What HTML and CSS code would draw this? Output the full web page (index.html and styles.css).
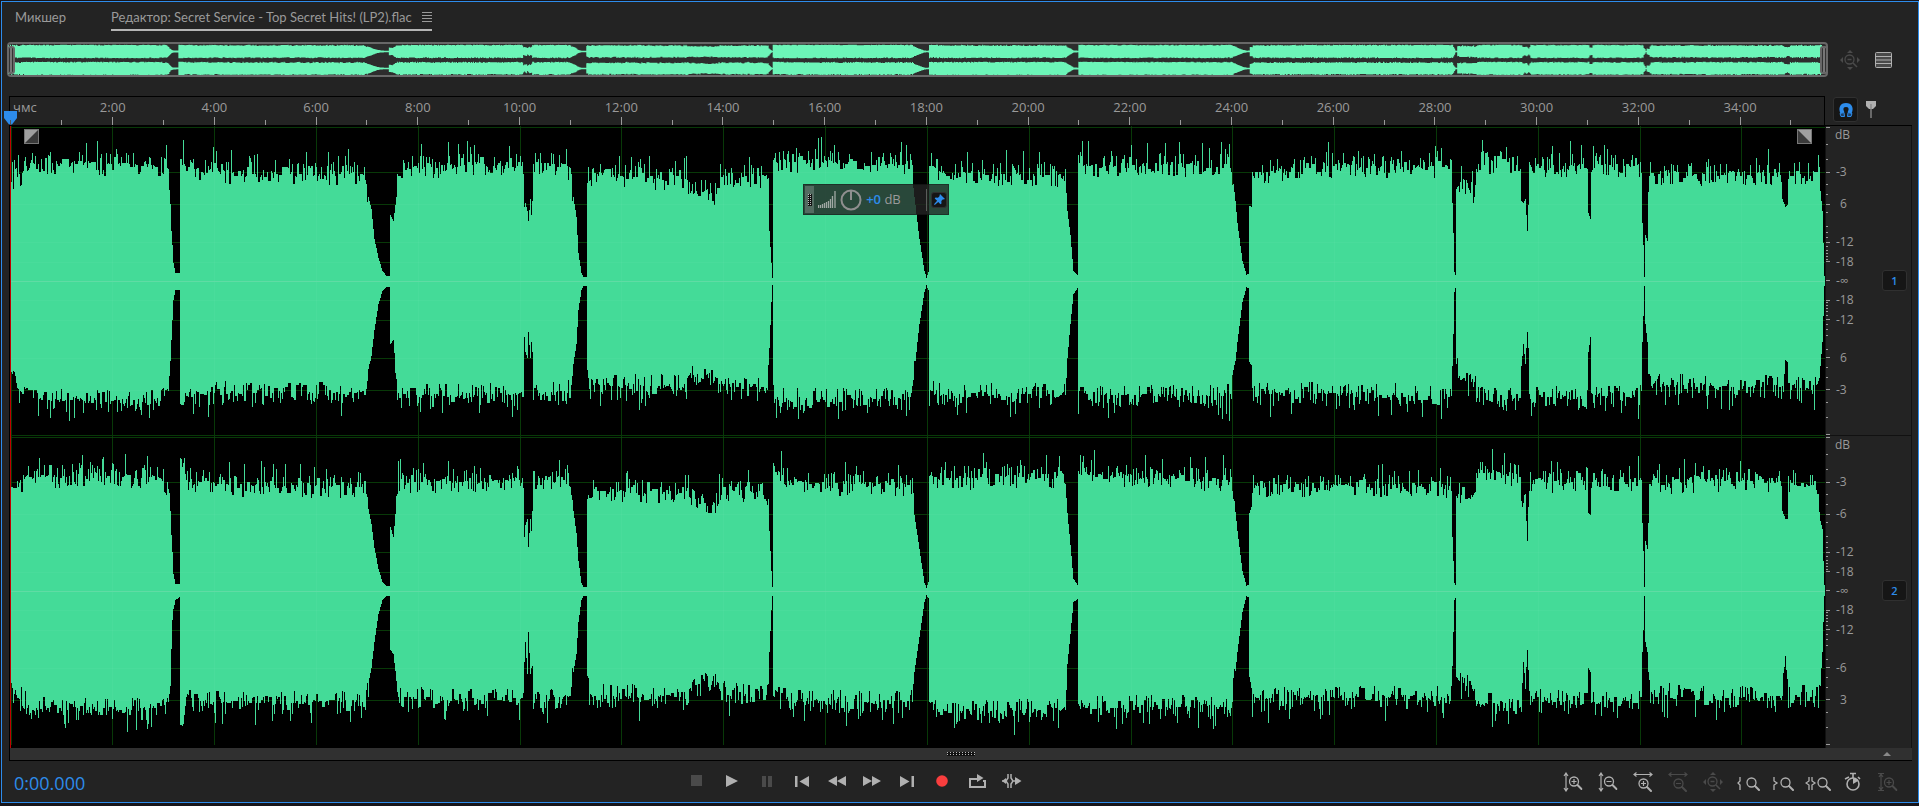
FILE: index.html
```html
<!DOCTYPE html>
<html lang="ru">
<head>
  <meta charset="UTF-8" />
  <meta name="viewport" content="width=device-width, initial-scale=1.0" />
  <title>Редактор</title>
  <link rel="stylesheet" href="styles.css">
</head>
<body>
  <svg class="defs" aria-hidden="true">
    <symbol id="lens" viewBox="0 0 14 14">
      <circle cx="5.5" cy="5.5" r="4.5" fill="none" stroke="currentColor" stroke-width="1.3"/>
      <path d="M9 9l4 4" stroke="currentColor" stroke-width="2" stroke-linecap="round"/>
    </symbol>
    <symbol id="zoom-full" viewBox="0 0 20 20">
      <circle cx="9.5" cy="9.5" r="4.5" fill="none" stroke="currentColor" stroke-width="1.3"/>
      <path d="M7.5 9.5h4M13 13l4 4" fill="none" stroke="currentColor" stroke-width="1.6"/>
      <path d="M7 3l3-3 3 3zM7 17l3 3 3-3zM3 7l-3 3 3 3zM17 7l3 3-3 3z" fill="currentColor"/>
    </symbol>
  </svg>

  <main class="panel">
    <nav class="tabs">
      <button class="tab" type="button">Микшер</button>
      <button class="tab active" type="button">Редактор: Secret Service - Top Secret Hits! (LP2).flac
        <svg width="10" height="10" viewBox="0 0 10 10"><path d="M0 .5h10M0 3.5h10M0 6.5h10M0 9.5h10" stroke="currentColor"/></svg>
      </button>
    </nav>

    <div class="overview-row">
      <div class="overview">
        <span class="handle"></span>
        <svg id="overview" viewBox="0 0 1815 31" preserveAspectRatio="none"></svg>
        <span class="handle"></span>
      </div>
      <button class="icon dim" type="button" aria-label="Показать всё"><svg width="20" height="20"><use href="#zoom-full"/></svg></button>
      <button class="icon" type="button" aria-label="Список">
        <svg width="17" height="16" viewBox="0 0 17 16"><rect x=".5" y=".5" width="16" height="15" rx="1" fill="#4a4a4a" stroke="currentColor"/><path d="M0 4.5h17M0 8h17M0 11.5h17" stroke="currentColor" stroke-width="1.2"/></svg>
      </button>
    </div>

    <section class="editor">
      <div class="ruler">
        <svg id="ruler" class="axis"></svg>
        <svg class="playhead-cap" width="13" height="14" viewBox="0 0 13 14"><path d="M0 0h13v7l-5 6.500h-3l-5-6.500z" fill="#2d8ceb"/><path d="M6.500 9v5" stroke="#555"/></svg>
      </div>
      <div class="ruler-tools">
        <button class="toggle magnet" type="button" aria-label="Привязка">
          <svg width="16" height="16" viewBox="0 0 16 16"><path d="M4.500 11C2 6 4 3 8 3s6 3 3.500 8" fill="none" stroke="#2d8ceb" stroke-width="4"/><path d="M2 11.500l4-1 .5 4H3zM14 11.500l-4-1-.5 4H13z" fill="#1b3f68" stroke="#2d8ceb"/></svg>
        </button>
        <button class="icon marker" type="button" aria-label="Маркер">
          <svg width="10" height="17" viewBox="0 0 10 17"><path d="M0 0h10v5L7 8H3L0 5z" fill="currentColor"/><path d="M5 3v14" stroke="#888" stroke-width="1.400"/></svg>
        </button>
      </div>

      <div class="waves">
        <svg class="channel" data-channel="0" viewBox="0 0 1815 310" preserveAspectRatio="none"></svg>
        <svg class="channel" data-channel="1" viewBox="0 0 1815 310" preserveAspectRatio="none"></svg>
        <span class="playhead"></span>
        <svg class="fade fade-in" width="15" height="15" viewBox="0 0 15 15"><rect width="15" height="15" fill="#a0a0a0"/><path d="M14 1v13H1z" fill="#3a3a3a"/><rect x=".5" y=".5" width="14" height="14" fill="none" stroke="#777"/></svg>
        <svg class="fade fade-out" width="15" height="15" viewBox="0 0 15 15"><rect width="15" height="15" fill="#a0a0a0"/><path d="M1 1v13h13z" fill="#3a3a3a"/><rect x=".5" y=".5" width="14" height="14" fill="none" stroke="#777"/></svg>
        <div class="hud">
          <span class="hud-grip"><i class="dots"></i></span>
          <svg width="18" height="17" viewBox="0 0 18 17"><path d="M.5 17v-3M2.500 17v-3M4.500 17v-4M6.500 17v-5M8.500 17v-6M10.500 17v-7M12.500 17v-9M14.500 17v-12M17 17v-17" stroke="#a0a8a4" stroke-width="1.300"/></svg>
          <svg width="22" height="22" viewBox="0 0 22 22"><circle cx="11" cy="11" r="9.500" fill="none" stroke="#8f8f8f" stroke-width="2"/><path d="M11 2v9" stroke="#8f8f8f" stroke-width="2"/></svg>
          <span class="gain"><b>+0</b> dB</span>
          <span class="hud-line"></span>
          <button class="toggle pin" type="button" aria-label="Закрепить">
            <svg width="11" height="11" viewBox="0 0 11 11"><path d="M6 0l5 5-1.500.5-.5-.2-1.700 1.700.2 2.500-1 .8L4.200 7.900.8 11 0 10.200l3.100-3.400L.7 4.500l.8-1 2.500.2L5.700 2l-.2-.5z" fill="#2d8ceb"/></svg>
          </button>
        </div>
      </div>
      <div class="scales">
        <div class="scale"><svg class="axis db" data-blank="-6"></svg><button class="toggle ch" type="button">1</button></div>
        <div class="scale"><svg class="axis db" data-blank="3"></svg><button class="toggle ch" type="button">2</button></div>
      </div>

      <div class="scrollbar">
        <i class="dots wide"></i>
        <svg width="8" height="4" viewBox="0 0 8 4"><path d="M0 4l4-4 4 4z" fill="#8a8a8a"/></svg>
      </div>
    </section>

    <footer class="bar">
      <output class="time">0:00.000</output>
      <div class="buttons transport">
        <button class="dim" type="button" aria-label="Стоп"><svg width="12" height="12"><path d="M0 0h11v11H0z" fill="currentColor"/></svg></button>
        <button type="button" aria-label="Воспроизведение"><svg width="12" height="12"><path d="M0 0l12 6-12 6z" fill="currentColor"/></svg></button>
        <button class="dim" type="button" aria-label="Пауза"><svg width="10" height="12"><path d="M0 1h4v11H0zM6 1h4v11H6z" fill="currentColor"/></svg></button>
        <button type="button" aria-label="В начало"><svg width="14" height="12"><path d="M0 1h2.500v11H0zM14 1v11L4.500 6.500z" fill="currentColor"/></svg></button>
        <button type="button" aria-label="Назад"><svg width="18" height="10"><path d="M9 0v10L0 5zM18 0v10L9 5z" fill="currentColor"/></svg></button>
        <button type="button" aria-label="Вперёд"><svg width="18" height="10"><path d="M0 0v10l9-5zM9 0v10l9-5z" fill="currentColor"/></svg></button>
        <button type="button" aria-label="В конец"><svg width="14" height="12"><path d="M0 1v11l9.500-5.500zM11.500 1H14v11h-2.500z" fill="currentColor"/></svg></button>
        <button type="button" aria-label="Запись"><svg width="12" height="12"><circle cx="6" cy="6" r="5.800" fill="#f93e3e"/></svg></button>
        <button type="button" aria-label="Цикл"><svg width="17" height="14" viewBox="0 0 17 14"><path d="M5 5H1v8h15V7h-2" fill="none" stroke="currentColor" stroke-width="2"/><path d="M5 4h3V0l6.500 4L8 8V6H5z" fill="currentColor"/></svg></button>
        <button type="button" aria-label="Пропуск выделения"><svg width="20" height="14" viewBox="0 0 20 14"><path d="M6 0v4L4 7l2 3v4M9 0v4l2 3-2 3v4M0 7h5M10 7h6" fill="none" stroke="currentColor" stroke-width="1.500"/><path d="M0 7l4-3v6zM13 3l6.500 4L13 11z" fill="currentColor"/></svg></button>
      </div>
      <div class="buttons">
        <button type="button" aria-label="Увеличить амплитуду"><svg width="20" height="20" viewBox="0 0 20 20"><path d="M3 2v16M1 4l2-3 2 3M1 16l2 3 2-3M8.500 9.500h5M11 7v5" fill="none" stroke="currentColor" stroke-width="1.200"/><use href="#lens" x="5.500" y="4" width="14" height="14"/></svg></button>
        <button type="button" aria-label="Уменьшить амплитуду"><svg width="20" height="20" viewBox="0 0 20 20"><path d="M3 2v16M1 4l2-3 2 3M1 16l2 3 2-3M8.500 9.500h5" fill="none" stroke="currentColor" stroke-width="1.200"/><use href="#lens" x="5.500" y="4" width="14" height="14"/></svg></button>
        <button type="button" aria-label="Увеличить время"><svg width="20" height="20" viewBox="0 0 20 20"><path d="M1 2.500h18M3.500.5L1 2.500l2.500 2M16.500.5l2.500 2-2.500 2M8 11.500h5M10.500 9v5" fill="none" stroke="currentColor" stroke-width="1.200"/><use href="#lens" x="5" y="6" width="14" height="14"/></svg></button>
        <button class="dim" type="button" aria-label="Уменьшить время"><svg width="20" height="20" viewBox="0 0 20 20"><path d="M1 2.500h18M3.500.5L1 2.500l2.500 2M16.500.5l2.500 2-2.500 2M8 11.500h5" fill="none" stroke="currentColor" stroke-width="1.200"/><use href="#lens" x="5" y="6" width="14" height="14"/></svg></button>
        <button class="dim" type="button" aria-label="Весь файл"><svg width="20" height="20"><use href="#zoom-full"/></svg></button>
        <button type="button" aria-label="К точке входа"><svg width="24" height="20" viewBox="0 0 24 20"><path d="M4 5v4l-2 2 2 2v5" fill="none" stroke="currentColor" stroke-width="1.300"/><use href="#lens" x="10" y="5" width="14" height="14"/></svg></button>
        <button type="button" aria-label="К точке выхода"><svg width="22" height="20" viewBox="0 0 22 20"><path d="M2 5v4l3 2-3 2v5" fill="none" stroke="currentColor" stroke-width="1.300"/><use href="#lens" x="8" y="5" width="14" height="14"/></svg></button>
        <button type="button" aria-label="К выделению"><svg width="26" height="20" viewBox="0 0 26 20"><path d="M4 5v4l-3 2 3 2v5M7 5v4l3 2-3 2v5" fill="none" stroke="currentColor" stroke-width="1.300"/><use href="#lens" x="12" y="5" width="14" height="14"/></svg></button>
        <button type="button" aria-label="Таймер"><svg width="18" height="20" viewBox="0 0 18 20"><circle cx="9" cy="12" r="6" fill="none" stroke="currentColor" stroke-width="1.600"/><path d="M9 12V6a6 6 0 0 1 5 3z" fill="currentColor"/><path d="M9 6V2M6 1.500h6M1 7l4-2M14 5l2 2" stroke="currentColor" stroke-width="1.600"/></svg></button>
        <button class="dim" type="button" aria-label="Сбросить масштаб"><svg width="20" height="20" viewBox="0 0 20 20"><path d="M3 2v16M0 1.500h6M0 18.500h6M1 5l2-3 2 3M1 15l2 3 2-3M8.500 10.500h5M11 8v5" fill="none" stroke="currentColor" stroke-width="1.200"/><use href="#lens" x="5.500" y="5" width="14" height="14"/></svg></button>
      </div>
    </footer>
  </main>

  <script src="wave.js"></script>
</body>
</html>
```
FILE: styles.css
```css
* {
  box-sizing: border-box;
}
body {
  margin: 0;
  min-height: 100vh;
  padding: 1px 0 3px 1px;
  display: flex;
  background: #17151a;
  color: #9a9a9a;
  font-family: "Open Sans", "Noto Sans", sans-serif;
  font-size: 13px;
}
button {
  margin: 0;
  padding: 0;
  border: 0;
  background: none;
  color: #b0b0b0;
  font: inherit;
}
svg {
  display: block;
}
.defs {
  position: absolute;
  width: 0;
  height: 0;
}
.panel {
  flex: 1;
  min-width: 0;
  display: flex;
  flex-direction: column;
  border: 1px solid #2d8ceb;
  background: #232323;
}

/* tabs */
.tabs {
  display: flex;
  gap: 45px;
  height: 29px;
  padding-left: 13px;
}
.tab {
  display: flex;
  align-items: center;
  gap: 10px;
  padding-top: 2px;
  color: #9a9a9a;
  font-family: Lato, "Noto Sans", sans-serif;
  font-size: 13px;
  white-space: nowrap;
  border-bottom: 2px solid transparent;
}
.tab.active {
  border-color: #b5b5b5;
}

/* overview */
.overview-row {
  display: flex;
  align-items: center;
  gap: 12px;
  margin-top: 11px;
  padding: 0 26px 0 5px;
}
.overview {
  flex: 1;
  min-width: 0;
  display: flex;
  align-items: center;
  height: 35px;
  border: 2px solid #686868;
  border-radius: 4px;
  background: #2d2d2d;
}
.overview svg {
  flex: 1;
  min-width: 0;
  height: 31px;
  margin: 0 -5px;
}
.handle {
  z-index: 1;
  width: 8px;
  height: 28px;
  margin: 0 -2px;
  border: 2px solid #686868;
  border-radius: 3px;
  background: linear-gradient(90deg, #333 1px, #777 1px, #777 3px, #333 3px);
}
.icon {
  display: flex;
}
.overview-row .icon + .icon {
  margin-left: 3px;
}
.dim {
  color: #4a4a4a;
}

/* editor */
.editor {
  flex: 1;
  display: grid;
  grid-template-columns: 1fr 87px;
  grid-template-rows: 30px 1fr 12px;
  margin: 19px 6px 0 7px;
  border-left: 1px solid #000;
  border-bottom: 1px solid #000;
}
.ruler {
  position: relative;
  padding-left: 1px;
  border-top: 1px solid #000;
  border-right: 1px solid #000;
  border-bottom: 1px solid #000;
}
.axis {
  width: 100%;
  height: 100%;
}
.axis text {
  fill: #9a9a9a;
  font-size: 13px;
}
.axis line {
  stroke: #9a9a9a;
  shape-rendering: crispEdges;
}
.playhead-cap {
  position: absolute;
  left: -6px;
  bottom: 0;
}
.ruler-tools {
  display: flex;
  align-items: center;
  gap: 8px;
  padding: 0 0 2px 8px;
  border-bottom: 1px solid #000;
}
.toggle {
  display: flex;
  align-items: center;
  justify-content: center;
  border: 1px solid #303030;
  border-radius: 3px;
  background: #161616;
  color: #2d8ceb;
}
.magnet {
  width: 25px;
  height: 25px;
}
.waves {
  position: relative;
  display: flex;
  flex-direction: column;
  padding-bottom: 3px;
  background: #000;
}
.channel {
  flex: 1 1 0;
  width: 100%;
  height: 0;
  shape-rendering: crispEdges;
}
.grid {
  fill: #003300;
}
.body {
  fill: #44db98;
}
.glow {
  fill: #fff;
  opacity: 0.03;
}
.center {
  fill: #5fdca4;
}
.playhead {
  position: absolute;
  top: 0;
  bottom: 0;
  left: 0;
  width: 1px;
  background: #c00000;
}
.fade {
  position: absolute;
  top: 3px;
}
.fade-in {
  left: 14px;
}
.fade-out {
  right: 13px;
}
.hud {
  position: absolute;
  top: 58px;
  left: 43.7%;
  display: flex;
  align-items: center;
  gap: 4px;
  width: 146px;
  height: 31px;
  padding: 1px;
  border: 1px solid rgba(0, 0, 0, 0.3);
  background: rgba(35, 35, 35, 0.8);
}
.hud-grip {
  display: flex;
  align-items: center;
  justify-content: center;
  align-self: stretch;
  width: 9px;
  background: rgba(255, 255, 255, 0.2);
}
.dots {
  width: 4px;
  height: 12px;
  background: conic-gradient(at 1px 1px, #111 75%, #bbb 0) 0 0 / 2px 2px;
}
.dots.wide {
  width: 28px;
  height: 4px;
  background-size: 3px 2px;
}
.gain {
  flex: 1;
  padding-bottom: 2px;
  white-space: nowrap;
}
.gain b {
  color: #2d8ceb;
  font-weight: 600;
}
.hud-line {
  width: 1px;
  height: 22px;
  background: #5c5c5c;
}
.pin {
  width: 16px;
  height: 16px;
}
.scales {
  display: flex;
  flex-direction: column;
  padding-bottom: 3px;
  border-left: 1px solid #111;
  border-right: 1px solid #111;
}
.scale {
  flex: 1 1 0;
  display: flex;
  align-items: center;
  justify-content: space-between;
  padding-right: 4px;
}
.scale + .scale {
  border-top: 1px solid #111;
}
.scale .axis {
  width: 40px;
}
.db text {
  font-size: 12px;
}
.ch {
  width: 25px;
  height: 21px;
  font-size: 11px;
  font-weight: 600;
}
.scrollbar {
  grid-column: 1 / -1;
  display: grid;
  grid-template-columns: 1fr auto 1fr;
  align-items: center;
  background: #303030;
}
.scrollbar .dots {
  grid-column: 2;
}
.scrollbar svg {
  justify-self: end;
  margin-right: 21px;
}

/* transport */
.bar {
  display: flex;
  align-items: center;
  justify-content: space-between;
  height: 41px;
  padding: 0 13px 0 12px;
}
.time {
  width: 140px;
  padding-top: 2px;
  color: #2d8ceb;
  font-size: 18px;
}
.buttons {
  display: flex;
}
.transport {
  padding-bottom: 2px;
}
.buttons button {
  display: flex;
  align-items: center;
  justify-content: center;
  width: 35px;
  height: 34px;
}
```
FILE: wave.js
```js
const NS = 'http://www.w3.org/2000/svg';
const LENGTH = 1815;      // columns in the file
const MINUTES = 35.65;    // duration
const FULL = 154;         // 0 dB height, in columns' units

// position, left up, left down, right up, right down
const ENV = [
  [0, 100, 92, 105, 100], [12, 108, 108, 106, 106], [18, 118, 117, 114, 115], [90, 117, 119, 116, 117],
  [150, 116, 117, 114, 116], [158, 112, 108, 102, 108], [160, 85, 88, 80, 85], [161, 50, 58, 56, 57],
  [162, 36, 38, 39, 28], [163, 18, 18, 17, 17], [165, 8, 8, 7, 8], [169, 8, 8, 7, 5],
  [170, 126, 122, 132, 132], [173, 120, 124, 127, 133], [176, 112, 112, 112, 108], [230, 107, 111, 106, 111],
  [355, 107, 111, 104, 110], [357, 88, 95, 87, 96], [361, 72, 74, 67, 76], [364, 42, 48, 43, 50],
  [368, 23, 22, 22, 22], [372, 10, 9, 9, 8], [376, 5, 5, 5, 4], [379, 5, 5, 5, 4],
  [380, 66, 62, 64, 58], [383, 60, 58, 54, 62], [386, 84, 98, 88, 88], [388, 114, 115, 108, 106],
  [450, 116, 113, 110, 108], [513, 115, 112, 110, 107], [514, 74, 55, 54, 70], [515, 78, 70, 66, 50],
  [517, 70, 76, 72, 82], [518, 60, 50, 44, 40], [520, 82, 76, 72, 82], [521, 66, 60, 60, 76],
  [522, 80, 70, 80, 74], [523, 119, 111, 112, 112], [555, 116, 111, 111, 106],
  [560, 104, 110, 104, 102], [563, 84, 82, 80, 80], [566, 64, 62, 58, 62], [568, 28, 28, 30, 30],
  [571, 8, 8, 8, 8], [573, 4, 4, 4, 4], [576, 4, 4, 4, 4], [577, 101, 95, 98, 96],
  [583, 106, 104, 102, 104], [676, 102, 104, 98, 104], [684, 90, 92, 92, 92], [704, 88, 94, 88, 92],
  [710, 106, 104, 102, 100], [755, 104, 108, 98, 104], [758, 100, 94, 92, 92], [759, 50, 66, 60, 60],
  [761, 18, 20, 20, 18], [762, 3, 3, 4, 4], [763, 119, 114, 124, 104], [780, 119, 118, 108, 109],
  [900, 118, 116, 106, 110], [902, 107, 105, 106, 100], [904, 84, 88, 76, 80], [909, 42, 42, 42, 45],
  [914, 10, 10, 8, 10], [916, 3, 3, 3, 3], [918, 9, 8, 9, 6], [919, 117, 108, 115, 115],
  [935, 107, 113, 113, 120], [1050, 106, 112, 114, 118], [1055, 104, 102, 106, 112], [1057, 70, 76, 78, 72],
  [1060, 46, 42, 46, 42], [1063, 10, 12, 12, 10], [1067, 6, 6, 6, 7], [1068, 115, 112, 117, 116],
  [1150, 116, 114, 113, 115], [1220, 115, 114, 111, 115], [1223, 102, 98, 98, 98], [1227, 58, 60, 60, 60],
  [1232, 20, 20, 20, 20], [1236, 6, 5, 5, 4], [1238, 7, 6, 6, 5], [1239, 75, 80, 78, 85],
  [1241, 74, 83, 84, 90], [1242, 108, 112, 104, 108], [1330, 116, 112, 106, 104], [1441, 112, 114, 104, 106],
  [1442, 78, 84, 54, 74], [1443, 48, 52, 30, 40], [1444, 9, 10, 8, 8], [1445, 6, 6, 6, 6], [1446, 92, 82, 92, 86],
  [1450, 98, 96, 98, 92], [1456, 96, 92, 98, 92], [1460, 86, 90, 92, 94], [1465, 92, 100, 100, 104],
  [1466, 118, 116, 119, 110], [1510, 119, 118, 116, 113], [1511, 80, 86, 90, 104], [1513, 78, 62, 88, 70],
  [1515, 82, 82, 90, 92], [1517, 50, 50, 50, 58], [1518, 76, 66, 84, 78], [1519, 115, 114, 108, 106],
  [1577, 117, 117, 112, 112], [1578, 68, 70, 78, 76], [1580, 62, 55, 76, 80],
  [1581, 116, 113, 111, 110], [1631, 115, 113, 112, 110], [1632, 58, 60, 68, 60], [1633, 36, 34, 40, 38],
  [1634, 4, 4, 4, 4], [1635, 46, 42, 50, 50], [1637, 40, 60, 42, 60], [1638, 96, 100, 68, 80],
  [1639, 112, 100, 108, 95], [1640, 108, 102, 108, 100], [1700, 107, 104, 110, 106], [1770, 108, 105, 110, 106],
  [1772, 82, 106, 80, 98], [1775, 74, 78, 72, 64], [1777, 76, 80, 72, 92], [1778, 108, 108, 106, 104],
  [1808, 106, 104, 106, 104], [1810, 90, 84, 70, 92], [1812, 70, 60, 62, 60], [1813, 38, 34, 30, 30],
  [1814, 5, 4, 6, 4]
];

let seed = 7;
function rnd() {
  seed = (seed * 16807) % 2147483647;
  return seed / 2147483647;
}

function el(parent, name, attrs, text) {
  const node = document.createElementNS(NS, name);
  for (const key in attrs) node.setAttribute(key, attrs[key]);
  if (text) node.textContent = text;
  parent.appendChild(node);
  return node;
}

// one height per column, with transients on the loud parts
function heights(col) {
  const out = [];
  let k = 0;
  let n = 0;
  for (let x = 0; x < LENGTH; x++) {
    while (k < ENV.length - 2 && ENV[k + 1][0] <= x) k++;
    const a = ENV[k], b = ENV[k + 1];
    const t = Math.min(1, (x - a[0]) / (b[0] - a[0]));
    let h = a[col] + (b[col] - a[col]) * t;
    if (h > 84) {
      const r = rnd();
      if (r < 0.3) n = rnd() * 6 - 3;
      else if (r < 0.5) n = -4 - rnd() * 8;
      else if (r < 0.7) n = 3 + rnd() * 9;
      else if (r < 0.76) n = 10 + rnd() * 15;
      else if (n > 9) n = 0;
      h = h > 121 ? h + n / 2 : h + n;
    }
    out.push(Math.round(h));
  }
  return out;
}

function outline(up, down, mid, k) {
  let d = 'M0 ' + mid;
  up.forEach((h, x) => { d += 'V' + (mid - h * k).toFixed(1) + 'H' + (x + 1); });
  for (let x = LENGTH - 1; x >= 0; x--) d += 'V' + (mid + 1 + down[x] * k).toFixed(1) + 'H' + x;
  return d + 'z';
}

function grid(svg, cls) {
  for (let m = 0; m < MINUTES; m += 2) {
    el(svg, 'rect', { class: cls, x: Math.round(m / MINUTES * LENGTH + 0.5), y: 0, width: 1, height: 309 });
  }
  [0, 3, 6, 12, 18].forEach(db => {
    const h = Math.round(FULL * Math.pow(10, -db / 20));
    el(svg, 'rect', { class: cls, x: 0, y: 155 - h, width: LENGTH, height: 1 });
    el(svg, 'rect', { class: cls, x: 0, y: 155 + h, width: LENGTH, height: 1 });
  });
}

const overview = document.getElementById('overview');
document.querySelectorAll('.channel').forEach((svg, i) => {
  const up = heights(1 + i * 2);
  const down = heights(2 + i * 2);
  grid(svg, 'grid');
  el(svg, 'path', { class: 'body', d: outline(up, down, 155, 1) });
  grid(svg, 'glow');
  el(svg, 'rect', { class: 'center', x: 0, y: 155, width: LENGTH, height: 1 });
  el(overview, 'path', {
    fill: '#6cf5b8',
    d: outline(up.map(h => Math.min(h, 122)), down.map(h => Math.min(h, 122)), 7 + i * 17, 0.052)
  });
});

const ruler = document.getElementById('ruler');
el(ruler, 'text', { x: 2, y: 15 }, 'чмс');
for (let m = 1; m < MINUTES; m++) {
  const x = m / MINUTES * 100 + '%';
  el(ruler, 'line', { x1: x, x2: x, y1: m % 2 ? 23 : 20, y2: 28 });
  if (m % 2 === 0) el(ruler, 'text', { x: x, y: 15, 'text-anchor': 'middle' }, m + ':00');
}

document.querySelectorAll('.db').forEach(svg => {
  const at = v => (155.5 + v) / 310 * 100 + '%';
  const tick = (v, w) => el(svg, 'line', { x1: 0, x2: w, y1: at(v), y2: at(v) });
  const label = (v, s) => el(svg, 'text', { x: s[0] === '-' ? 10 : 14, y: at(v), dy: 4 }, s);
  label(-146, 'dB');
  svg.lastChild.setAttribute('x', 9);
  tick(0, 4);
  label(0, '-∞');
  for (let db = 0; db <= 18; db++) {
    if (db === 8) continue;
    const v = FULL * Math.pow(10, -db / 20);
    const major = [0, 3, 6, 12, 18].includes(db);
    [-v, v].forEach(p => {
      tick(p, major ? 4 : 2);
      if (!major || db === 0) return;
      const bare = svg.dataset.blank === '-6' ? db === 6 : db === 3 && p > 0;
      label(p, bare ? String(db) : '-' + db);
    });
  }
});
```
